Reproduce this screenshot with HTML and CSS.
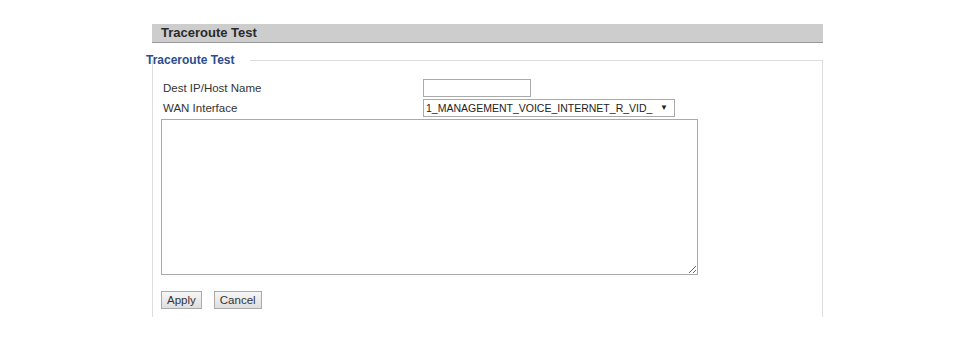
FILE: index.html
```html
<!DOCTYPE html>
<html lang="en">
<head>
    <meta charset="UTF-8">
    <title>Traceroute Test</title>
    <link rel="stylesheet" href="styles.css">
</head>
<body>
    <div class="page">
        <div class="bar">Traceroute Test</div>

        <div class="legend-row">
            <span class="legend-title">Traceroute Test</span>
            <span class="legend-line"></span>
        </div>

        <div class="panel">
            <div class="form-row">
                <label class="label">Dest IP/Host Name</label>
                <input class="text-input" type="text">
            </div>
            <div class="form-row">
                <label class="label">WAN Interface</label>
                <span class="select-wrap">
                    <select class="select">
                        <option>1_MANAGEMENT_VOICE_INTERNET_R_VID_</option>
                    </select>
                    <span class="select-arrow">&#9660;</span>
                </span>
            </div>
            <textarea class="result"></textarea>
            <div class="buttons">
                <button class="btn">Apply</button>
                <button class="btn">Cancel</button>
            </div>
        </div>
    </div>
</body>
</html>
```

FILE: styles.css
```css
body {
    margin: 0;
    background-color: #fff;
    font-family: "Liberation Sans", Arial, sans-serif;
    color: #333;
}

.page {
    width: 671px;
    margin: 24px 0 0 152px;
}

/* Title bar */
.bar {
    height: 18px;
    line-height: 18px;
    padding-left: 9px;
    background-color: #cdcdcd;
    border-bottom: 1px solid #9a9a9a;
    font-size: 13px;
    font-weight: bold;
    color: #2a2a2a;
}

/* Fieldset-like legend */
.legend-row {
    display: flex;
    align-items: center;
    height: 14px;
    margin: 10px 0 0 -6px;
}

.legend-title {
    padding-right: 16px;
    font-size: 12px;
    font-weight: bold;
    color: #2c4c8c;
}

.legend-line {
    flex: 1;
    border-top: 1px solid #ddd;
}

.panel {
    border-left: 1px solid #ddd;
    border-right: 1px solid #ddd;
    padding: 18px 0 8px 8px;
    margin-top: -7px;
}

.form-row {
    display: flex;
    align-items: center;
    height: 20px;
    font-size: 11.5px;
}

.label {
    width: 260px;
    padding-left: 2px;
}

.text-input {
    box-sizing: border-box;
    width: 108px;
    height: 18px;
    margin: 0;
    border: 1px solid #aaa;
    padding: 0 2px;
}

.select-wrap {
    position: relative;
    display: inline-block;
}

.select {
    appearance: none;
    -webkit-appearance: none;
    box-sizing: border-box;
    width: 252px;
    height: 18px;
    margin: 0;
    padding: 0 2px;
    border: 1px solid #aaa;
    background-color: #fff;
    font-family: "Liberation Sans", Arial, sans-serif;
    font-size: 10.5px;
    color: #222;
}

.select-arrow {
    position: absolute;
    right: 7px;
    top: 4px;
    font-size: 8px;
    color: #222;
    pointer-events: none;
}

.result {
    display: block;
    box-sizing: border-box;
    width: 537px;
    height: 156px;
    margin: 1px 0 0 0;
    border: 1px solid #aaa;
}

.buttons {
    display: flex;
    gap: 12px;
    margin-top: 16px;
}

.btn {
    height: 18px;
    padding: 0 5px;
    border: 1px solid #aaa;
    background: linear-gradient(#f6f6f6, #dedede);
    font-family: "Liberation Sans", Arial, sans-serif;
    font-size: 11.5px;
    color: #333;
}
```
